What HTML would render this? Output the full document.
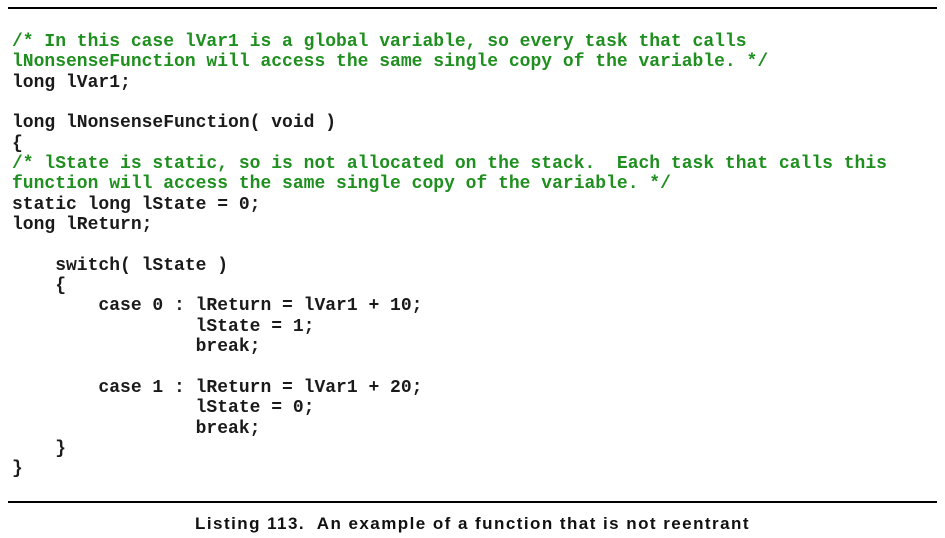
<!DOCTYPE html>
<html><head><meta charset="utf-8"><style>
html,body{margin:0;padding:0;background:#fff;width:945px;height:538px;overflow:hidden}
.rule{position:absolute;left:8px;width:929px;height:2px;background:#000}
pre{position:absolute;left:12px;top:32px;margin:0;font-family:"Liberation Mono",monospace;font-weight:bold;font-size:18px;line-height:20.35px;color:#1a1a1a;letter-spacing:0}
.c{color:#1f8f1f}
.cap{position:absolute;left:0;width:945px;top:514px;text-align:center;font-family:"Liberation Sans",sans-serif;font-weight:bold;font-size:17px;letter-spacing:1.45px;color:#111;white-space:pre}
</style></head><body>
<div class="rule" style="top:7px"></div>
<pre><span class="c">/* In this case lVar1 is a global variable, so every task that calls
lNonsenseFunction will access the same single copy of the variable. */</span>
long lVar1;

long lNonsenseFunction( void )
{
<span class="c">/* lState is static, so is not allocated on the stack.  Each task that calls this
function will access the same single copy of the variable. */</span>
static long lState = 0;
long lReturn;

    switch( lState )
    {
        case 0 : lReturn = lVar1 + 10;
                 lState = 1;
                 break;

        case 1 : lReturn = lVar1 + 20;
                 lState = 0;
                 break;
    }
}</pre>
<div class="rule" style="top:501px"></div>
<div class="cap">Listing 113.  An example of a function that is not reentrant</div>
</body></html>
